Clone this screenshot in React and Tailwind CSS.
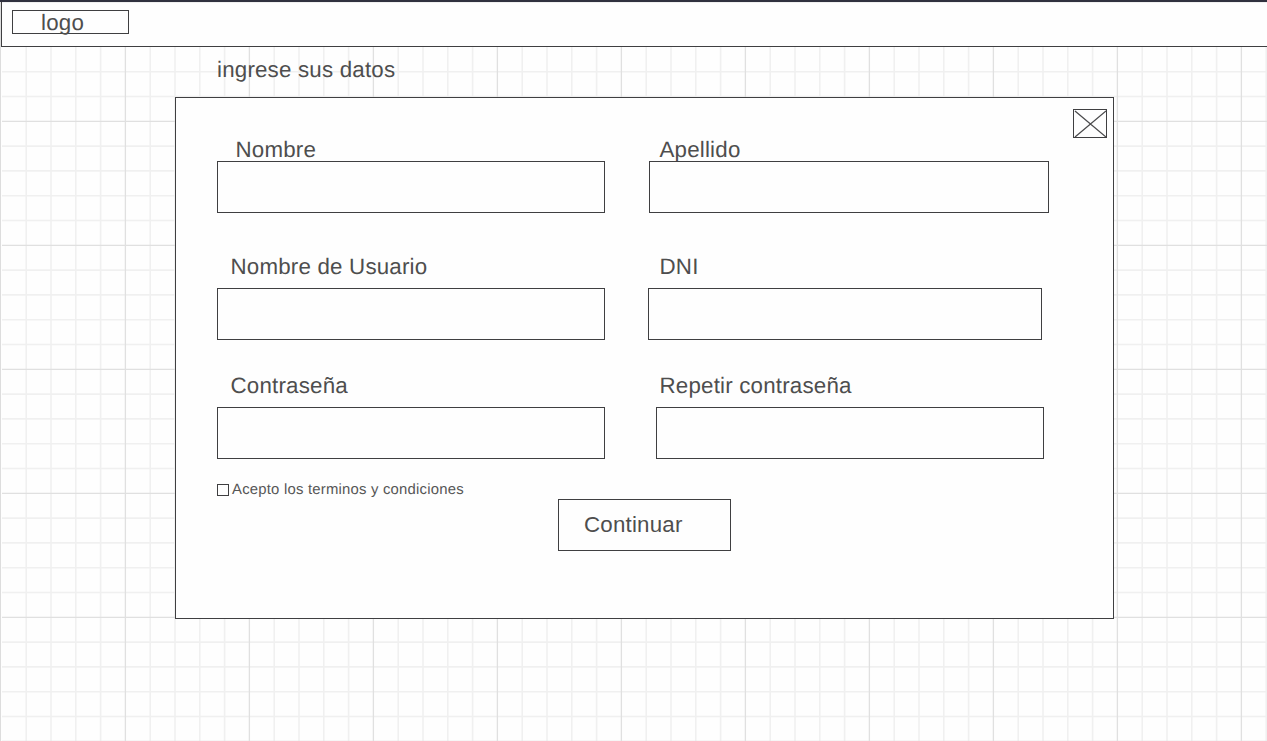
const CELL = 24.8;
const columns = Array.from({ length: 52 }, (_, i) => i);
const rows = Array.from({ length: 29 }, (_, i) => i);

function GridPaper() {
  return (
    <svg className="absolute inset-0 -z-10" width="1267" height="741" aria-hidden="true">
      {[false, true].map((major) => (
        <g key={String(major)} stroke={major ? '#e0e0e0' : '#f0f0f0'} strokeWidth={major ? 1.3 : 1.6}>
          {columns.filter((i) => i > 0 && (i % 5 === 0) === major).map((i) => (
            <line key={'c' + i} x1={1.4 + i * CELL} x2={1.4 + i * CELL} y1="47" y2="741" />
          ))}
          {rows.filter((i) => (i % 5 === 2) === major).map((i) => (
            <line key={'r' + i} x1="2" x2="1267" y1={71.7 + i * CELL} y2={71.7 + i * CELL} />
          ))}
        </g>
      ))}
      <path d="M0.5 2V741" stroke="#dddddd" />
    </svg>
  );
}

function Field({ label, labelClass, inputClass, className }) {
  return (
    <label className={'flex flex-col ' + className}>
      <span className={'h-6 whitespace-nowrap leading-[26px] ' + labelClass}>{label}</span>
      <input className={'h-[52px] shrink-0 border border-[#3f3f41] bg-transparent px-3 outline-none ' + inputClass} />
    </label>
  );
}

export default function App() {
  return (
    <div className="relative isolate h-[741px] w-[1267px] overflow-hidden bg-[#fefefe] font-['Liberation_Sans',Arial,sans-serif] text-[22.32px] tracking-[0.2px] text-[#4e4e4e] [text-rendering:geometricPrecision]">
      <GridPaper />
      <header className="border-t-2 border-[#30313f]">
        <div className="ml-px h-[45px] border-b border-l border-[#3f3f41] bg-[#fefefe] pt-2 pl-2.5 shadow-[inset_0_1px_0_#f0f0f0]">
          <div className="h-6 w-[117px] border border-[#3f3f41] pl-[28px] leading-6">logo</div>
        </div>
      </header>

      <h1 className="mt-[10px] ml-[217px] h-6 leading-[26px]">ingrese sus datos</h1>

      <main className="mt-4 ml-[175px] flex h-[522px] w-[939px] flex-col border border-[#3f3f41] bg-[#fefefe] pt-[11px] pl-[41px]">
        <div className="flex">
          <div className="flex w-[856px] pt-7">
            <Field label="Nombre" className="w-[431px]" labelClass="pl-[18.5px]" inputClass="w-[388px]" />
            <Field label="Apellido" className="pl-px" labelClass="pl-[10.5px]" inputClass="w-[400px]" />
          </div>
          <button aria-label="Cerrar" className="h-[29px] w-[34px] border border-[#3f3f41]">
            <svg width="32" height="27" className="block" fill="none" stroke="#4c4c4e" strokeWidth="1.3">
              <path d="M1 1L32 27M32 1L1 27" />
            </svg>
          </button>
        </div>
        <div className="mt-[41px] flex">
          <Field label="Nombre de Usuario" className="w-[431px] gap-[10px]" labelClass="pl-[13.5px]" inputClass="w-[388px]" />
          <Field label="DNI" className="gap-[10px]" labelClass="pl-[11.5px]" inputClass="w-[394px]" />
        </div>
        <div className="mt-[33px] flex">
          <Field label="Contraseña" className="w-[431px] gap-[10px]" labelClass="pl-[13.5px]" inputClass="w-[388px]" />
          <Field label="Repetir contraseña" className="gap-[10px] pl-2" labelClass="pl-[3.5px]" inputClass="w-[388px]" />
        </div>
        <div className="mt-5 flex">
          <label className="flex h-5 w-[341px] items-center gap-[3px] text-[14.88px] leading-5 tracking-[0.21px] text-[#565656]">
            <input type="checkbox" className="mt-[2px] size-3 appearance-none border border-[#3f3f41]" />
            <span className="pt-[2px]">Acepto los terminos y condiciones</span>
          </label>
          <button className="mt-5 h-[52px] w-[173px] border border-[#3f3f41] pl-[25px] text-left leading-[50px]">Continuar</button>
        </div>
      </main>
    </div>
  );
}
